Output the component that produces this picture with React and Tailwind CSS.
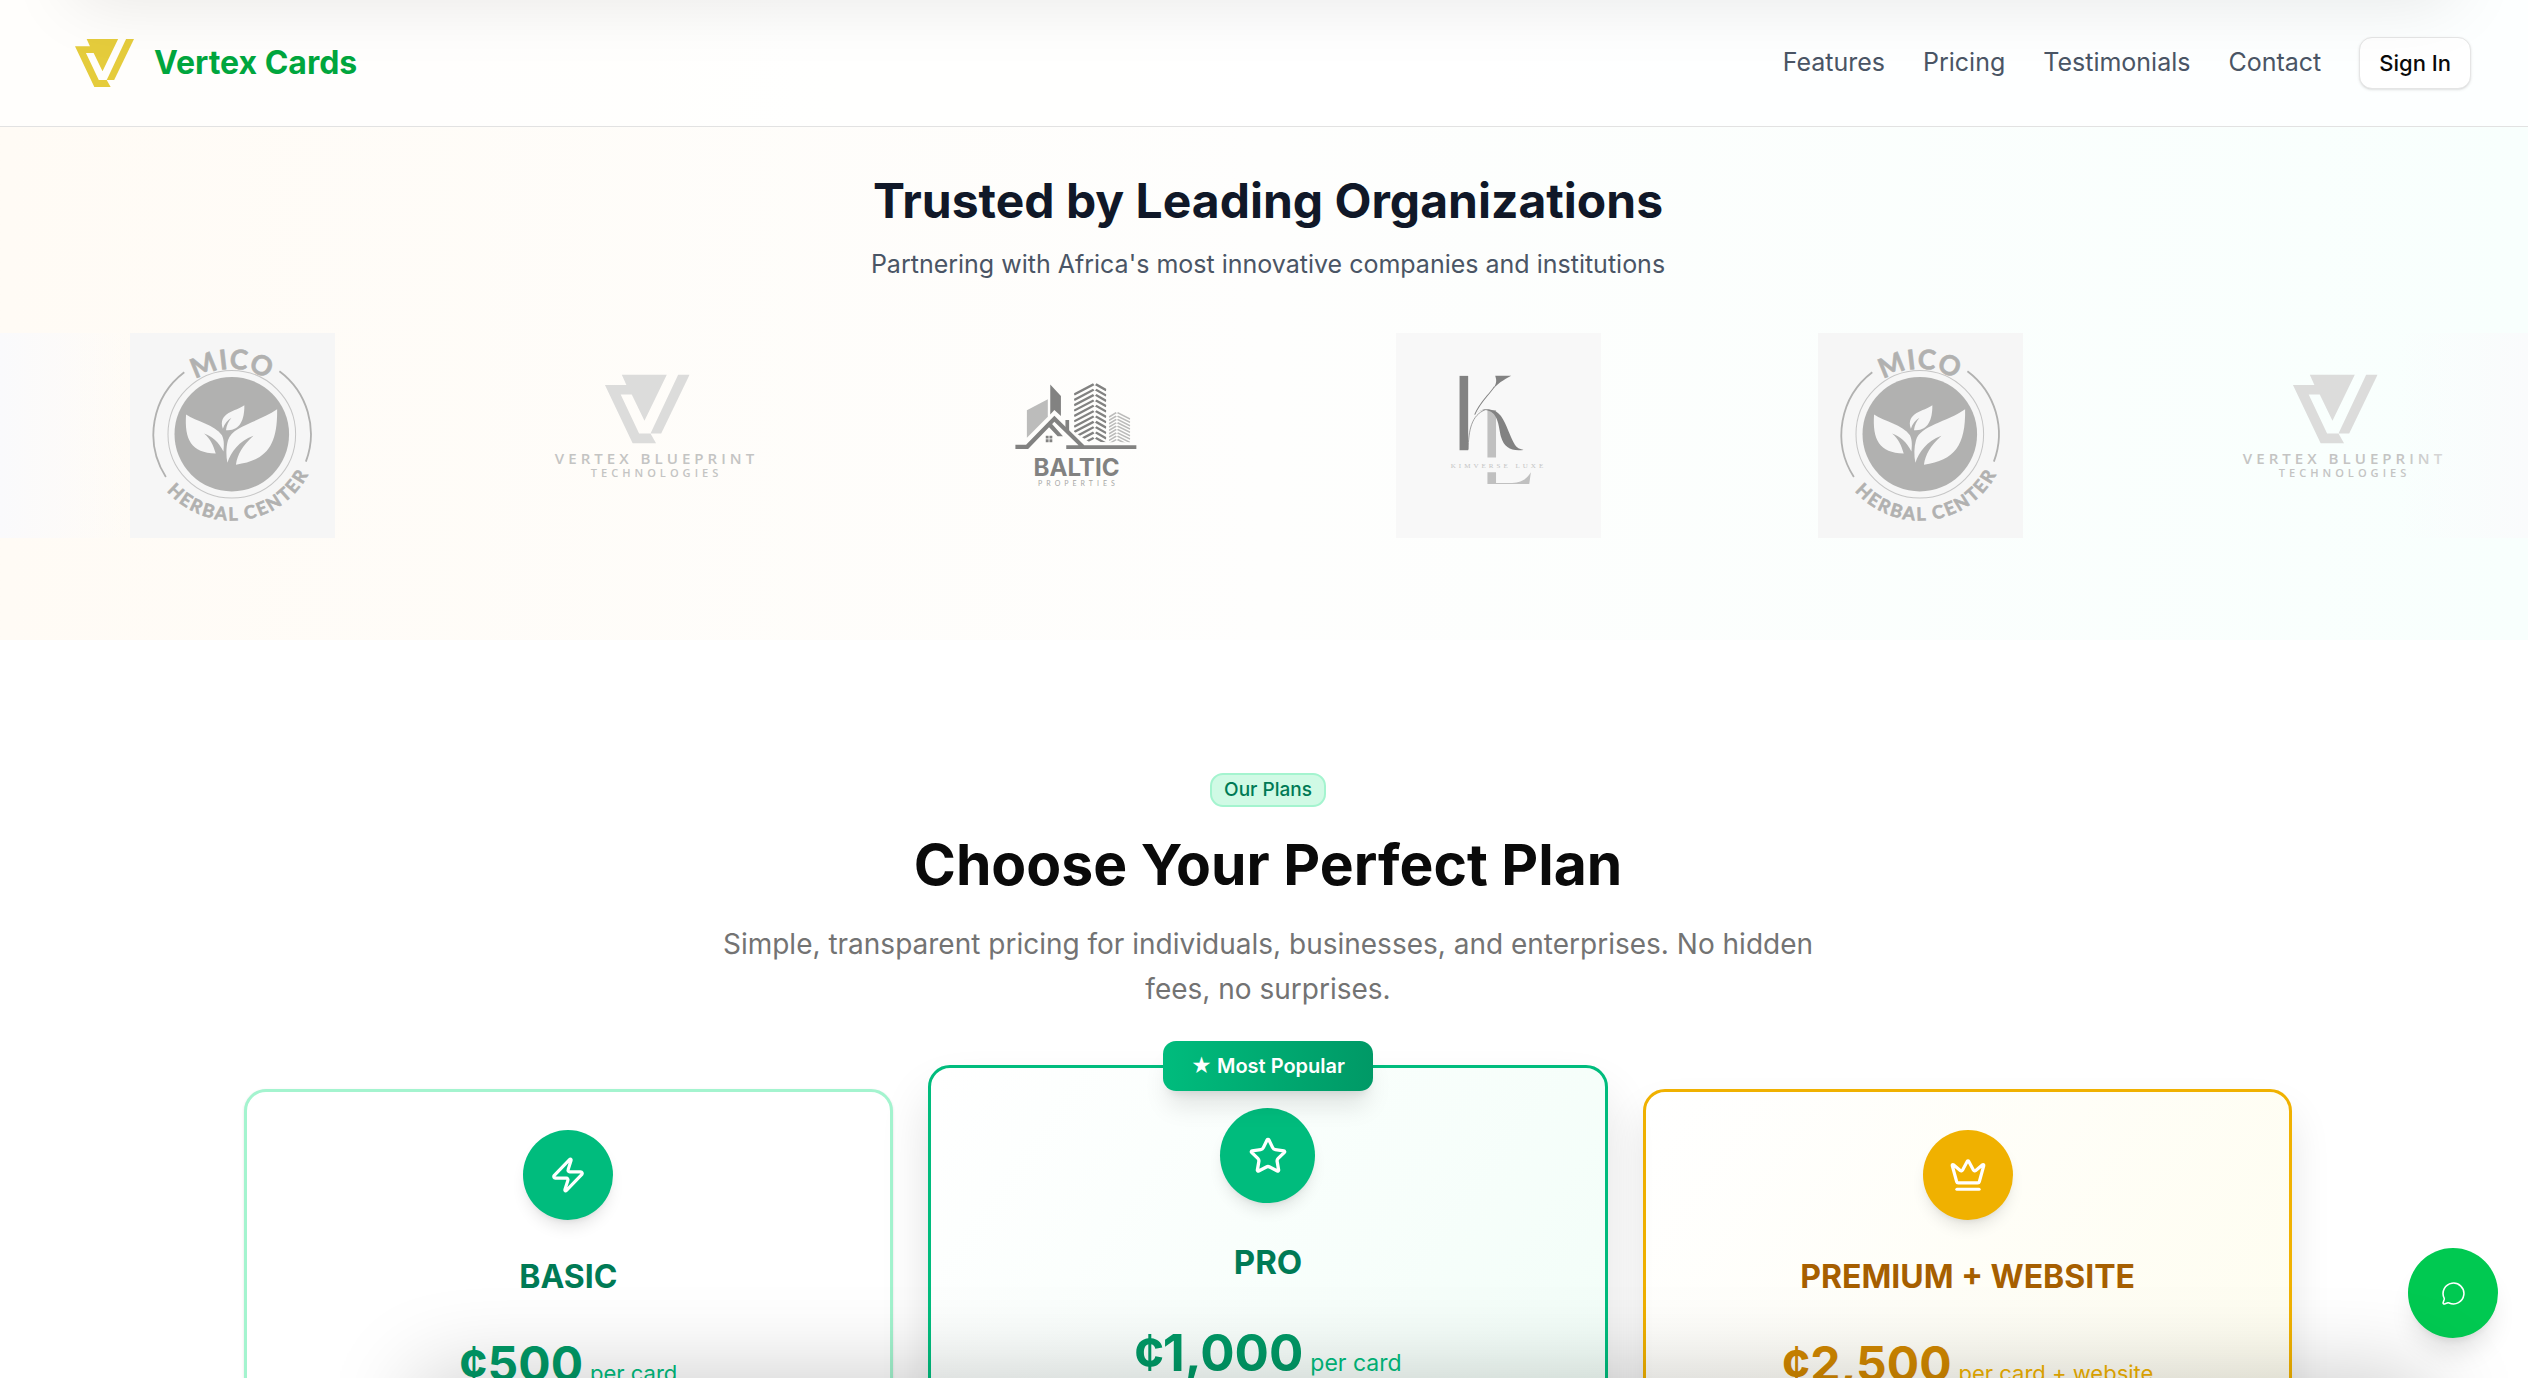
import { Crown, MessageCircle, Star, Zap } from 'lucide-react';

const navLinks = [
  { label: 'Features', href: '#features' },
  { label: 'Pricing', href: '#pricing' },
  { label: 'Testimonials', href: '#testimonials' },
  { label: 'Contact', href: '#contact' },
];

const TALL_STRIPES = [0, 1, 2, 3, 4, 5, 6, 7, 8, 9, 10];
const SHORT_STRIPES = [0, 1, 2, 3, 4, 5, 6, 7, 8];

function VertexMark(props) {
  return (
    <svg viewBox="344 163 253 206" fill="currentColor" aria-hidden="true" {...props}>
      <path d="M394 163H529L462 301L424 223H391L446 339H480L497 369H427L344 194H408Z" />
      <path d="M563 163H597L512 339H480Z" />
    </svg>
  );
}

function MicoLogo() {
  return (
    <svg viewBox="0 0 204 204" className="w-full bg-[#f6f6f6] text-[#b1b1b0]" role="img" aria-label="Mico Herbal Center">
      <defs>
        <path id="mico-top" d="M36.5 100.7A65 65 0 0 1 166.5 100.7" />
        <path id="mico-bottom" d="M15.3 100.7A86 86 0 0 0 187.3 100.7" />
      </defs>
      <circle cx="101.3" cy="100.7" r="57" fill="currentColor" />
      <circle cx="101.3" cy="100.7" r="63.5" fill="none" stroke="currentColor" strokeWidth="1" opacity="0.7" />
      <path d="M54 39A78 78 0 0 0 35.7 143.3M148.7 38A78 78 0 0 1 175 128" fill="none" stroke="currentColor" strokeWidth="1.8" />
      <g fill="#f6f6f6">
        <path d="M55.8 81C66 88 84 91 91.5 101.7C94 107 93.5 112 93 118C88 108 82 103 73.7 100C80 105 83 112 85.3 120C61 119 54 106 55.8 81Z" />
        <path d="M146.4 76C128 89 102 92 97.5 106.7C95.5 114 95.5 122 96.9 129C101 118 108 108 122.8 102.3C112 112 107 121 105.4 131C136 127 147 112 146.4 76Z" />
        <path d="M113.8 72C106 78 87 79 92.4 95.3C94 90 97 87 101 84.3C98 88 96 92 95.5 96.7C109 98 114 87 113.8 72Z" />
      </g>
      <g fill="currentColor" stroke="currentColor" strokeWidth="0.6" fontFamily="Lato, sans-serif" fontWeight="700" textAnchor="middle">
        <text fontSize="27" letterSpacing="1">
          <textPath href="#mico-top" startOffset="50%">MICO</textPath>
        </text>
        <text fontSize="18" letterSpacing="2">
          <textPath href="#mico-bottom" startOffset="54%">HERBAL CENTER</textPath>
        </text>
      </g>
    </svg>
  );
}

function VertexLogo() {
  return (
    <svg viewBox="0 0 204 204" className="w-full text-[#c4c4c3]" role="img" aria-label="Vertex Blueprint Technologies">
      <VertexMark x="52.7" y="41.3" width="84.3" height="68.7" className="text-[#dcdcdb]" />
      <g fill="currentColor" fontFamily="'Open Sans', sans-serif" fontWeight="600" textAnchor="middle">
        <text x="104" y="130" fontSize="15" letterSpacing="4">VERTEX BLUEPRINT</text>
        <text x="104" y="143" fontSize="11" letterSpacing="4">TECHNOLOGIES</text>
      </g>
    </svg>
  );
}

function BalticLogo() {
  return (
    <svg viewBox="0 0 204 204" className="w-full text-[#828281]" role="img" aria-label="Baltic Properties">
      <defs>
        <clipPath id="tall-tower">
          <path d="M232 150H311V366H270L232 335Z" />
        </clipPath>
        <clipPath id="short-tower">
          <path d="M317 250H369V366H317Z" />
        </clipPath>
      </defs>
      <g transform="scale(0.408 0.3333) translate(12 -40)">
        <path d="M117 271L168 238V290L117 353Z" fill="#bcbcbb" />
        <path d="M174 194L200 228V288L184 270L174 283Z" fill="currentColor" />
        <path d="M89 374H115L184 287L257 375H384V386H213V375H243L184 305L120 386H89Z" fill="currentColor" />
        <path d="M211 300H220V336L211 325Z" fill="currentColor" />
        <path d="M163 318L174 306L205 348H192L170 320Z" fill="currentColor" />
        <path d="M163 347H170V355H163ZM172 347H179V355H172ZM163 357H170V366H163ZM172 357H179V366H172Z" fill="currentColor" />
        <g clipPath="url(#tall-tower)" stroke="currentColor" strokeWidth="6.5">
          {TALL_STRIPES.map((n) => (
            <path key={n} d={`M232 ${224 + n * 16}L280 ${193 + n * 16}M285 ${193 + n * 16}L311 ${211 + n * 16}`} />
          ))}
        </g>
        <g clipPath="url(#short-tower)" stroke="#bcbcbb" strokeWidth="4.5">
          {SHORT_STRIPES.map((n) => (
            <path key={n} d={`M317 ${291 + n * 10}L335 ${278 + n * 10}M338 ${278 + n * 10}L369 ${297 + n * 10}`} />
          ))}
        </g>
      </g>
      <g textAnchor="middle" fill="currentColor">
        <text x="102" y="142" fontSize="24" fontWeight="700" fontFamily="Inter, sans-serif">BALTIC</text>
        <text x="104" y="152" fontSize="7" letterSpacing="4" fontFamily="Lato, sans-serif" opacity="0.7">PROPERTIES</text>
      </g>
    </svg>
  );
}

function KimverseLogo() {
  return (
    <svg viewBox="0 0 204 204" className="w-full bg-[#f8f8f8] text-[#828282]" role="img" aria-label="Kimverse Luxe">
      <g transform="scale(0.408 0.3333) translate(-1022 -40)">
        <path d="M1245 270H1266V412H1245ZM1245 456H1266V488H1305C1332 487 1343 472 1351 456L1347 491H1245Z" fill="#c0c0c0" />
        <path d="M1177 168H1198V390H1177Z" fill="currentColor" />
        <path d="M1264 168H1303C1285 180 1268 192 1256 212C1268 192 1268 184 1264 168Z" fill="currentColor" />
        <path d="M1198 388C1199 330 1206 285 1240 269" fill="none" stroke="currentColor" strokeWidth="2" />
        <path d="M1214 284C1226 248 1248 226 1262 200" fill="none" stroke="currentColor" strokeWidth="2.5" />
        <path d="M1216 280C1228 264 1262 260 1278 288C1292 312 1300 350 1312 374C1318 385 1325 387 1333 389C1304 393 1286 384 1278 350C1272 318 1272 272 1238 270C1228 270 1222 274 1216 280Z" fill="currentColor" />
      </g>
      <text x="102" y="134" fontSize="7" letterSpacing="3" textAnchor="middle" fill="#c4c4c4" fontFamily="'Liberation Serif', serif">KIMVERSE LUXE</text>
    </svg>
  );
}

const partners = [MicoLogo, VertexLogo, BalticLogo, KimverseLogo, MicoLogo, VertexLogo];

function Header() {
  return (
    <header className="relative z-10 flex h-[127px] items-center justify-between border-b border-[#e2e2e2] bg-white/70 pl-[75px] pr-[57px]">
      <a href="#home" className="flex items-center gap-[20px]">
        <VertexMark className="w-[59px] text-[#e5cc3c]" />
        <span className="text-[32px] font-bold text-[#00a63e]">Vertex Cards</span>
      </a>
      <nav className="flex items-center gap-[38px]">
        {navLinks.map((link) => (
          <a key={link.label} href={link.href} className="text-[25px] text-[#4a5565]">
            {link.label}
          </a>
        ))}
        <button type="button" className="h-[52px] rounded-[13px] border border-[#e5e5e5] bg-white px-[19px] text-[22px] font-medium text-neutral-950 shadow-sm">
          Sign In
        </button>
      </nav>
    </header>
  );
}

function Partners() {
  return (
    <section className="-mt-[127px] bg-linear-to-r from-[#fffbf5] via-[#fefefd] to-[#f8fffd] pt-[166px] pb-[102px]">
      <div className="pl-2 text-center">
        <h2 className="text-[48px] leading-[70px] font-bold text-[#101828]">Trusted by Leading Organizations</h2>
        <p className="mt-2 text-[25px] leading-[40px] text-[#4a5565]">
          Partnering with Africa's most innovative companies and institutions
        </p>
      </div>
      <div className="relative mt-[49px] overflow-hidden">
        <div className="flex gap-[217px] pl-[130px]">
          {partners.map((Logo, index) => (
            <div key={index} className="w-[205px] shrink-0">
              <Logo />
            </div>
          ))}
        </div>
        <div className="absolute inset-y-0 left-0 w-[130px] bg-linear-to-r from-[#fafafc] to-transparent" />
        <div className="absolute inset-y-0 right-0 w-[130px] bg-linear-to-l from-[#fafbfc] to-transparent" />
      </div>
    </section>
  );
}

function PlanCard({ name, price, unit, icon: Icon, cardClass, iconClass, nameClass, priceClass, unitClass }) {
  return (
    <article className={`flex h-[900px] flex-col items-center rounded-[22px] border-3 pt-[38px] ${cardClass}`}>
      <div className={`flex size-[90px] items-center justify-center rounded-full text-white shadow-lg ${iconClass}`}>
        <Icon className="size-[38px]" />
      </div>
      <h3 className={`mt-[32px] text-[32px] leading-[50px] font-bold ${nameClass}`}>{name}</h3>
      <p className="mt-[30px] flex items-baseline gap-[7px] leading-[64px]">
        <span className={`text-[48px] font-bold ${priceClass}`}>{price}</span>
        <span className={`text-[22px] ${unitClass}`}>{unit}</span>
      </p>
    </article>
  );
}

function FeaturedPlanCard() {
  return (
    <article className="relative -mx-4 -mt-6 flex h-[948px] flex-col items-center rounded-[22px] border-3 border-[#00bc7d] bg-linear-to-br from-white to-[#ecfdf5] pt-[40px] shadow-[0_30px_50px_rgba(0,0,0,0.12)]">
      <span className="absolute -top-[27px] flex h-[50px] items-center rounded-[13px] bg-linear-to-r from-[#00bc7d] to-[#009966] px-[28px] text-[20px] font-semibold whitespace-nowrap text-white shadow-xl">
        ★ Most Popular
      </span>
      <div className="flex size-[95px] items-center justify-center rounded-full bg-[#00bc7d] text-white shadow-lg">
        <Star className="size-[40px]" />
      </div>
      <h3 className="mt-[33px] text-[33px] leading-[52px] font-bold text-[#007a55]">PRO</h3>
      <p className="mt-[33px] flex items-baseline gap-[7px] leading-[64px]">
        <span className="text-[51px] font-bold text-[#009966]">¢1,000</span>
        <span className="text-[23px] text-[#00bc7d]">per card</span>
      </p>
    </article>
  );
}

function Pricing() {
  return (
    <section id="pricing" className="bg-white pt-[133px] pl-2">
      <div className="flex flex-col items-center text-center">
        <span className="flex h-[34px] items-center rounded-[13px] border-2 border-[#a4f4cf] bg-[#d0fae5] px-[12px] text-[19px] font-medium text-[#007a55]">
          Our Plans
        </span>
        <h2 className="mt-[26px] text-[57px] leading-[64px] font-bold text-neutral-950">Choose Your Perfect Plan</h2>
        <p className="mt-[25px] max-w-[1100px] text-[28px] leading-[45px] text-[#737373]">
          Simple, transparent pricing for individuals, businesses, and enterprises. No hidden
          <br />
          fees, no surprises.
        </p>
      </div>
      <div className="mx-auto mt-[77px] grid max-w-[2048px] grid-cols-3 items-start gap-[51px]">
        <PlanCard
          name="BASIC"
          price="¢500"
          unit="per card"
          icon={Zap}
          cardClass="border-[#a4f4cf] bg-white shadow-sm"
          iconClass="bg-[#00bc7d]"
          nameClass="text-[#007a55]"
          priceClass="text-[#009966]"
          unitClass="text-[#00bc7d]"
        />
        <FeaturedPlanCard />
        <PlanCard
          name="PREMIUM + WEBSITE"
          price="¢2,500"
          unit="per card + website"
          icon={Crown}
          cardClass="border-[#f0b100] bg-linear-to-br from-white to-[#fefce8] shadow-[0_24px_40px_rgba(0,0,0,0.1)]"
          iconClass="bg-[#f0b100]"
          nameClass="text-[#a65f00]"
          priceClass="text-[#d08700]"
          unitClass="text-[#f0b100]"
        />
      </div>
    </section>
  );
}

export default function App() {
  return (
    <div className="relative h-screen overflow-hidden bg-white font-['Inter',sans-serif]">
      <Header />
      <Partners />
      <Pricing />

      {/* Soft edge shadows over the top and bottom of the viewport */}
      <div className="pointer-events-none absolute inset-x-[75px] bottom-full z-20 h-[80px] shadow-[0_0_70px_rgba(0,0,0,0.1)]" />
      <div className="pointer-events-none absolute top-full right-[100px] left-[420px] z-20 h-[160px] shadow-[0_0_90px_rgba(0,0,0,0.22)]" />

      <button
        type="button"
        aria-label="Chat with us"
        className="fixed right-[30px] bottom-[40px] z-10 flex size-[90px] items-center justify-center rounded-full bg-[#00c951] text-white shadow-xl"
      >
        <MessageCircle className="size-[25px]" strokeWidth={1.5} />
      </button>
    </div>
  );
}
